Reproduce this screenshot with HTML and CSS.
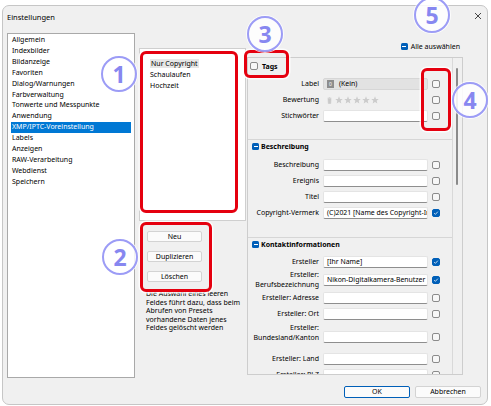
FILE: index.html
```html
<!DOCTYPE html>
<html lang="de">
<head>
<meta charset="utf-8">
<title>Einstellungen</title>
<link rel="stylesheet" href="styles.css">
</head>
<body>
<div class="dialog">
  <div class="titlebar">
    <span class="title">Einstellungen</span>
    <svg class="close" viewBox="0 0 8 8" width="8" height="8"><path d="M1 1L7 7M7 1L1 7" stroke="#333" stroke-width="0.9" fill="none"/></svg>
  </div>
  <div class="main">
    <ul class="cats">
      <li>Allgemein</li>
      <li>Indexbilder</li>
      <li>Bildanzeige</li>
      <li>Favoriten</li>
      <li>Dialog/Warnungen</li>
      <li>Farbverwaltung</li>
      <li>Tonwerte und Messpunkte</li>
      <li>Anwendung</li>
      <li class="sel">XMP/IPTC-Voreinstellung</li>
      <li>Labels</li>
      <li>Anzeigen</li>
      <li>RAW-Verarbeitung</li>
      <li>Webdienst</li>
      <li>Speichern</li>
    </ul>
    <div class="mid">
      <div class="presets">
        <div class="preset"><span class="psel">Nur Copyright</span></div>
        <div class="preset">Schaulaufen</div>
        <div class="preset">Hochzeit</div>
      </div>
      <div class="btns">
        <button class="btn">Neu</button>
        <button class="btn">Duplizieren</button>
        <button class="btn">Löschen</button>
      </div>
      <p class="help">Die Auswahl eines leeren<br>Feldes führt dazu, dass beim<br>Abrufen von Presets<br>vorhandene Daten jenes<br>Feldes gelöscht werden</p>
    </div>
    <div class="right">
      <div class="selall"><span class="mini"></span>Alle auswählen</div>
      <div class="group">
        <div class="scroll">
          <section class="sec tags">
            <div class="sechead"><span class="cb"></span>Tags</div>
            <div class="rows">
              <div class="row"><span class="lbl">Label</span><div class="field gray"><span class="swatch">0</span>(Kein)</div><span class="cb"></span></div>
              <div class="row"><span class="lbl">Bewertung</span>
                <div class="stars">
                  <svg width="5" height="7" viewBox="0 0 5 7"><path d="M0.5 1.2H4.5M1.8 0.5H3.2M1 1.8H4L3.7 6.5H1.3Z" fill="#c9c9c9" stroke="#c9c9c9" stroke-width="0.6"/></svg>
                  <svg class="star" viewBox="0 0 10 10" width="8" height="8"><path d="M5 0.4L6.3 3.6L9.7 3.8L7.1 6L7.9 9.4L5 7.6L2.1 9.4L2.9 6L0.3 3.8L3.7 3.6Z" fill="#cccccc"/></svg>
                  <svg class="star" viewBox="0 0 10 10" width="8" height="8"><path d="M5 0.4L6.3 3.6L9.7 3.8L7.1 6L7.9 9.4L5 7.6L2.1 9.4L2.9 6L0.3 3.8L3.7 3.6Z" fill="#cccccc"/></svg>
                  <svg class="star" viewBox="0 0 10 10" width="8" height="8"><path d="M5 0.4L6.3 3.6L9.7 3.8L7.1 6L7.9 9.4L5 7.6L2.1 9.4L2.9 6L0.3 3.8L3.7 3.6Z" fill="#cccccc"/></svg>
                  <svg class="star" viewBox="0 0 10 10" width="8" height="8"><path d="M5 0.4L6.3 3.6L9.7 3.8L7.1 6L7.9 9.4L5 7.6L2.1 9.4L2.9 6L0.3 3.8L3.7 3.6Z" fill="#cccccc"/></svg>
                  <svg class="star" viewBox="0 0 10 10" width="8" height="8"><path d="M5 0.4L6.3 3.6L9.7 3.8L7.1 6L7.9 9.4L5 7.6L2.1 9.4L2.9 6L0.3 3.8L3.7 3.6Z" fill="#cccccc"/></svg>
                </div>
                <span class="cb"></span></div>
              <div class="row"><span class="lbl">Stichwörter</span><div class="field"></div><span class="cb"></span></div>
            </div>
          </section>
          <section class="sec desc">
            <div class="sechead"><span class="mini"></span>Beschreibung</div>
            <div class="rows">
              <div class="row"><span class="lbl">Beschreibung</span><div class="field"></div><span class="cb"></span></div>
              <div class="row"><span class="lbl">Ereignis</span><div class="field"></div><span class="cb"></span></div>
              <div class="row"><span class="lbl">Titel</span><div class="field"></div><span class="cb"></span></div>
              <div class="row"><span class="lbl">Copyright-Vermerk</span><div class="field">(C)2021 [Name des Copyright-Inhabers]</div><span class="cb on"><svg viewBox="0 0 8 8" width="6" height="6"><path d="M1.5 4.2L3.2 5.8L6.5 2.2" stroke="#fff" stroke-width="1" fill="none"/></svg></span></div>
            </div>
          </section>
          <section class="sec contact">
            <div class="sechead"><span class="mini"></span>Kontaktinformationen</div>
            <div class="rows">
              <div class="row"><span class="lbl">Ersteller</span><div class="field">[Ihr Name]</div><span class="cb on"><svg viewBox="0 0 8 8" width="6" height="6"><path d="M1.5 4.2L3.2 5.8L6.5 2.2" stroke="#fff" stroke-width="1" fill="none"/></svg></span></div>
              <div class="row two"><span class="lbl">Ersteller:<br>Berufsbezeichnung</span><div class="field">Nikon-Digitalkamera-Benutzer</div><span class="cb on"><svg viewBox="0 0 8 8" width="6" height="6"><path d="M1.5 4.2L3.2 5.8L6.5 2.2" stroke="#fff" stroke-width="1" fill="none"/></svg></span></div>
              <div class="row"><span class="lbl">Ersteller: Adresse</span><div class="field"></div><span class="cb"></span></div>
              <div class="row"><span class="lbl">Ersteller: Ort</span><div class="field"></div><span class="cb"></span></div>
              <div class="row bund"><span class="lbl">Ersteller:<br>Bundesland/Kanton</span><div class="field"></div><span class="cb"></span></div>
              <div class="row"><span class="lbl">Ersteller: Land</span><div class="field"></div><span class="cb"></span></div>
              <div class="row"><span class="lbl">Ersteller: PLZ</span><div class="field"></div><span class="cb"></span></div>
            </div>
          </section>
        </div>
        <div class="track"><div class="thumb"></div></div>
      </div>
    </div>
  </div>
  <div class="footer">
    <button class="fbtn ok">OK</button>
    <button class="fbtn">Abbrechen</button>
  </div>
</div>

<div class="frame f1"></div>
<div class="frame f2"></div>
<div class="frame f3"></div>
<div class="frame f4"></div>
<div class="num n1">1</div>
<div class="num n2">2</div>
<div class="num n3">3</div>
<div class="num n4">4</div>
<div class="num n5">5</div>
</body>
</html>
```
FILE: styles.css
```css
* { box-sizing: border-box; margin: 0; padding: 0; }
body {
  background: #fff;
  font-family: "Noto Sans", "Open Sans", sans-serif;
  font-size: 7px;
  color: #000;
  position: relative;
  width: 491px;
  height: 406px;
  overflow: hidden;
}
.dialog {
  margin: 5px 0 0 2px;
  width: 486px;
  height: 400px;
  border: 1px solid #c6c6c6;
  border-radius: 7px;
  background: #f0f0f0;
  display: flex;
  flex-direction: column;
}
.titlebar {
  height: 27px;
  display: flex;
  justify-content: space-between;
  align-items: flex-start;
  padding: 6px 5px 0 4px;
}
.title { font-size: 7.5px; line-height: 10px; }
.close { display: block; }

.main { display: flex; height: 345px; padding-left: 4px; }
.cats {
  list-style: none;
  width: 128px;
  height: 345px;
  background: #fff;
  border: 1px solid #a9a9a9;
  padding: 1px 3px;
}
.cats li { line-height: 10.9px; padding-left: 1px; white-space: nowrap; }
.cats li.sel { background: #0078d4; color: #fff; }

.mid { width: 108px; margin-left: 4px; padding-top: 15px; }
.presets {
  width: 107px;
  height: 173px;
  background: #fff;
  border: 1px solid #cfcfcf;
  padding: 10px 0 0 10px;
}
.preset { line-height: 10.9px; }
.psel { background: #e6e6e6; padding: 0 1px; }
.btns {
  display: flex;
  flex-direction: column;
  gap: 9px;
  width: 55px;
  margin: 10px 0 0 8px;
}
.btn, .fbtn {
  height: 11px;
  border: 1px solid #d3d3d3;
  border-radius: 2px;
  background: #fbfbfb;
  font-family: inherit;
  font-size: 7px;
  line-height: 9px;
  color: #000;
  padding: 0;
}
.help {
  margin: 8px 0 0 7px;
  font-size: 7px;
  line-height: 8.6px;
  white-space: nowrap;
}

.right { width: 216px; }
.selall {
  height: 24px;
  display: flex;
  justify-content: flex-end;
  align-items: center;
  gap: 3px;
  padding: 3px 3px 0 0;
}
.mini {
  width: 7px;
  height: 7px;
  border-radius: 1.5px;
  background: #005fb8;
  position: relative;
  flex: none;
}
.mini::after {
  content: "";
  position: absolute;
  left: 1.5px;
  top: 3px;
  width: 4px;
  height: 1px;
  background: #fff;
}
.group {
  height: 318px;
  border: 1px solid #cdcdcd;
  display: flex;
}
.scroll { width: 204px; overflow: hidden; }
.track { width: 10px; border-left: 1px solid #d9d9d9; padding: 10px 0 0 3px; }
.thumb { width: 2px; height: 117px; background: #8a8a8a; border-radius: 1px; }

.sec + .sec { border-top: 1px solid #d6d6d6; }
.sechead {
  height: 13px;
  display: flex;
  align-items: center;
  gap: 2px;
  padding-left: 4px;
  font-weight: bold;
}
.tags .sechead { height: 16px; gap: 4px; padding-left: 2px; }
.tags .rows { margin-top: 2px; padding-bottom: 15px; }
.desc .rows { margin-top: 4px; padding-bottom: 16px; }
.contact .rows { margin-top: 3px; }

.row {
  display: grid;
  grid-template-columns: 70px 105px 8px;
  column-gap: 4px;
  align-items: center;
  height: 16px;
  padding-left: 1px;
}
.row.two { height: 20px; }
.row.bund { height: 29px; }
.row.bund .lbl { margin-bottom: 8px; }
.lbl { text-align: right; line-height: 10px; white-space: nowrap; }
.field {
  height: 12px;
  background: #fff;
  border: 1px solid #e4e4e4;
  border-bottom-color: #8e8e8e;
  border-radius: 2px;
  padding-left: 3px;
  font-size: 6.9px;
  line-height: 10px;
  overflow: hidden;
  white-space: nowrap;
}
.field.gray {
  background: #e2e2e2;
  border-color: #d6d6d6;
  display: flex;
  align-items: center;
  gap: 5px;
  padding-left: 3px;
}
.swatch {
  width: 7px;
  height: 8px;
  background: #8d8d8d;
  color: #fff;
  font-size: 5px;
  line-height: 8px;
  text-align: center;
}
.stars { display: flex; align-items: center; gap: 1px; padding-left: 4px; }
.stars svg { display: block; }
.stars svg:first-child { margin-right: 2px; }
.cb {
  width: 8px;
  height: 8px;
  border: 1px solid #8b8b8b;
  border-radius: 2px;
  background: #f7f7f7;
  flex: none;
  display: flex;
  align-items: center;
  justify-content: center;
}
.cb.on { background: #005fb8; border-color: #005fb8; }
.cb svg { display: block; }

.footer {
  display: flex;
  justify-content: flex-end;
  gap: 5px;
  margin-top: 8px;
  padding-right: 6px;
}
.fbtn { width: 66px; height: 12px; line-height: 10px; }
.fbtn.ok { border-color: #005fb8; }

.frame {
  position: absolute;
  border: 3.5px solid #e5000f;
  border-radius: 6px;
  box-shadow: 0 0 0 1.5px rgba(255,255,255,0.8);
}
.f1 { left: 140px; top: 51px; width: 98px; height: 162px; }
.f2 { left: 140px; top: 222px; width: 72px; height: 70px; }
.f3 { left: 244px; top: 50px; width: 45px; height: 28px; }
.f4 { left: 421px; top: 68px; width: 30px; height: 63px; }

.num {
  position: absolute;
  width: 36px;
  height: 36px;
  border-radius: 50%;
  border: 2.5px solid #9c9cf6;
  background: rgba(255,255,255,0.85);
  box-shadow: 0 0 0 1px rgba(255,255,255,0.8);
  color: #8787f0;
  font-family: "Noto Sans", sans-serif;
  font-weight: bold;
  font-size: 23px;
  line-height: 1;
  display: flex;
  align-items: center;
  justify-content: center;
}
.n1 { left: 101px; top: 56px; }
.n2 { left: 102px; top: 239px; }
.n3 { left: 247px; top: 16px; }
.n4 { left: 452px; top: 82px; }
.n5 { left: 414px; top: -3px; }
```
